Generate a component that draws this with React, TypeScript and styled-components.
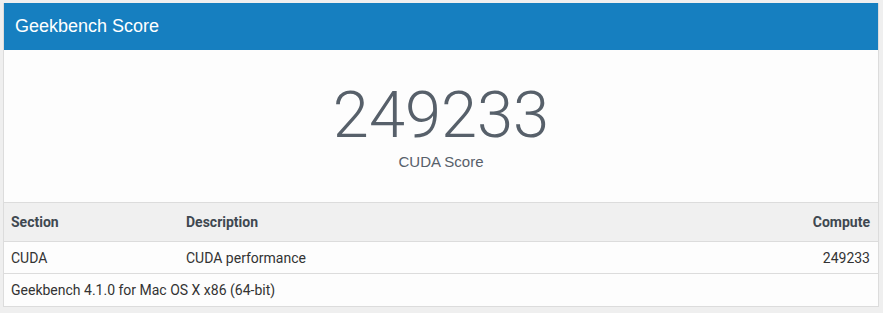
import * as React from "react";
import styled, {createGlobalStyle} from "styled-components";

const GlobalStyle = createGlobalStyle`
  html, body {
    margin: 0;
    padding: 0;
    background-color: #efefef;
  }
  body {
    font-family: Roboto, "Liberation Sans", Arial, sans-serif;
  }
`;

const Page = styled.div`
  padding: 3px 4px 7px 3px;
`;

const Panel = styled.div`
  background-color: #fdfdfd;
  border: 1px solid #dcdcdc;
  border-top: none;
`;

const PanelHeading = styled.div`
  height: 47px;
  display: flex;
  align-items: center;
  padding: 0 11px;
  background-color: #167fc0;
  color: #ffffff;
  font-family: "Liberation Sans", Arial, sans-serif;
  font-size: 18px;
`;

const ScoreBlock = styled.div`
  height: 152px;
  box-sizing: border-box;
  padding-top: 33px;
  display: flex;
  flex-direction: column;
  align-items: center;
  color: #57606a;
`;

const ScoreValue = styled.div`
  font-family: Roboto, sans-serif;
  font-weight: 300;
  font-size: 65px;
  line-height: 65px;
`;

const ScoreLabel = styled.div`
  font-family: "Liberation Sans", Arial, sans-serif;
  font-size: 15px;
  margin-top: 5px;
`;

const Table = styled.table`
  width: 100%;
  border-collapse: collapse;
  font-size: 14px;
  color: #333;
`;

const HeadCell = styled.th<{ $align?: string; $width?: string }>`
  text-align: ${p => p.$align || "left"};
  width: ${p => p.$width || "auto"};
  height: 38px;
  padding: 0 8px 0 7px;
  background-color: #f0f0f0;
  border-top: 1px solid #dcdcdc;
  color: #3f4850;
  font-weight: 700;
`;

const Cell = styled.td<{ $align?: string }>`
  text-align: ${p => p.$align || "left"};
  height: 31px;
  padding: 0 8px 0 7px;
  border-top: 1px solid #dcdcdc;
`;

const FooterCell = styled.td`
  height: 32px;
  padding: 0 7px;
  border-top: 1px solid #dcdcdc;
`;

export default function App() {
    return (
        <Page>
            <GlobalStyle/>
            <Panel>
                <PanelHeading>Geekbench Score</PanelHeading>
                <ScoreBlock>
                    <ScoreValue>249233</ScoreValue>
                    <ScoreLabel>CUDA Score</ScoreLabel>
                </ScoreBlock>
                <Table>
                    <thead>
                    <tr>
                        <HeadCell $width="160px">Section</HeadCell>
                        <HeadCell>Description</HeadCell>
                        <HeadCell $align="right">Compute</HeadCell>
                    </tr>
                    </thead>
                    <tbody>
                    <tr>
                        <Cell>CUDA</Cell>
                        <Cell>CUDA performance</Cell>
                        <Cell $align="right">249233</Cell>
                    </tr>
                    <tr>
                        <FooterCell colSpan={3}>Geekbench 4.1.0 for Mac OS X x86 (64-bit)</FooterCell>
                    </tr>
                    </tbody>
                </Table>
            </Panel>
        </Page>
    );
}
